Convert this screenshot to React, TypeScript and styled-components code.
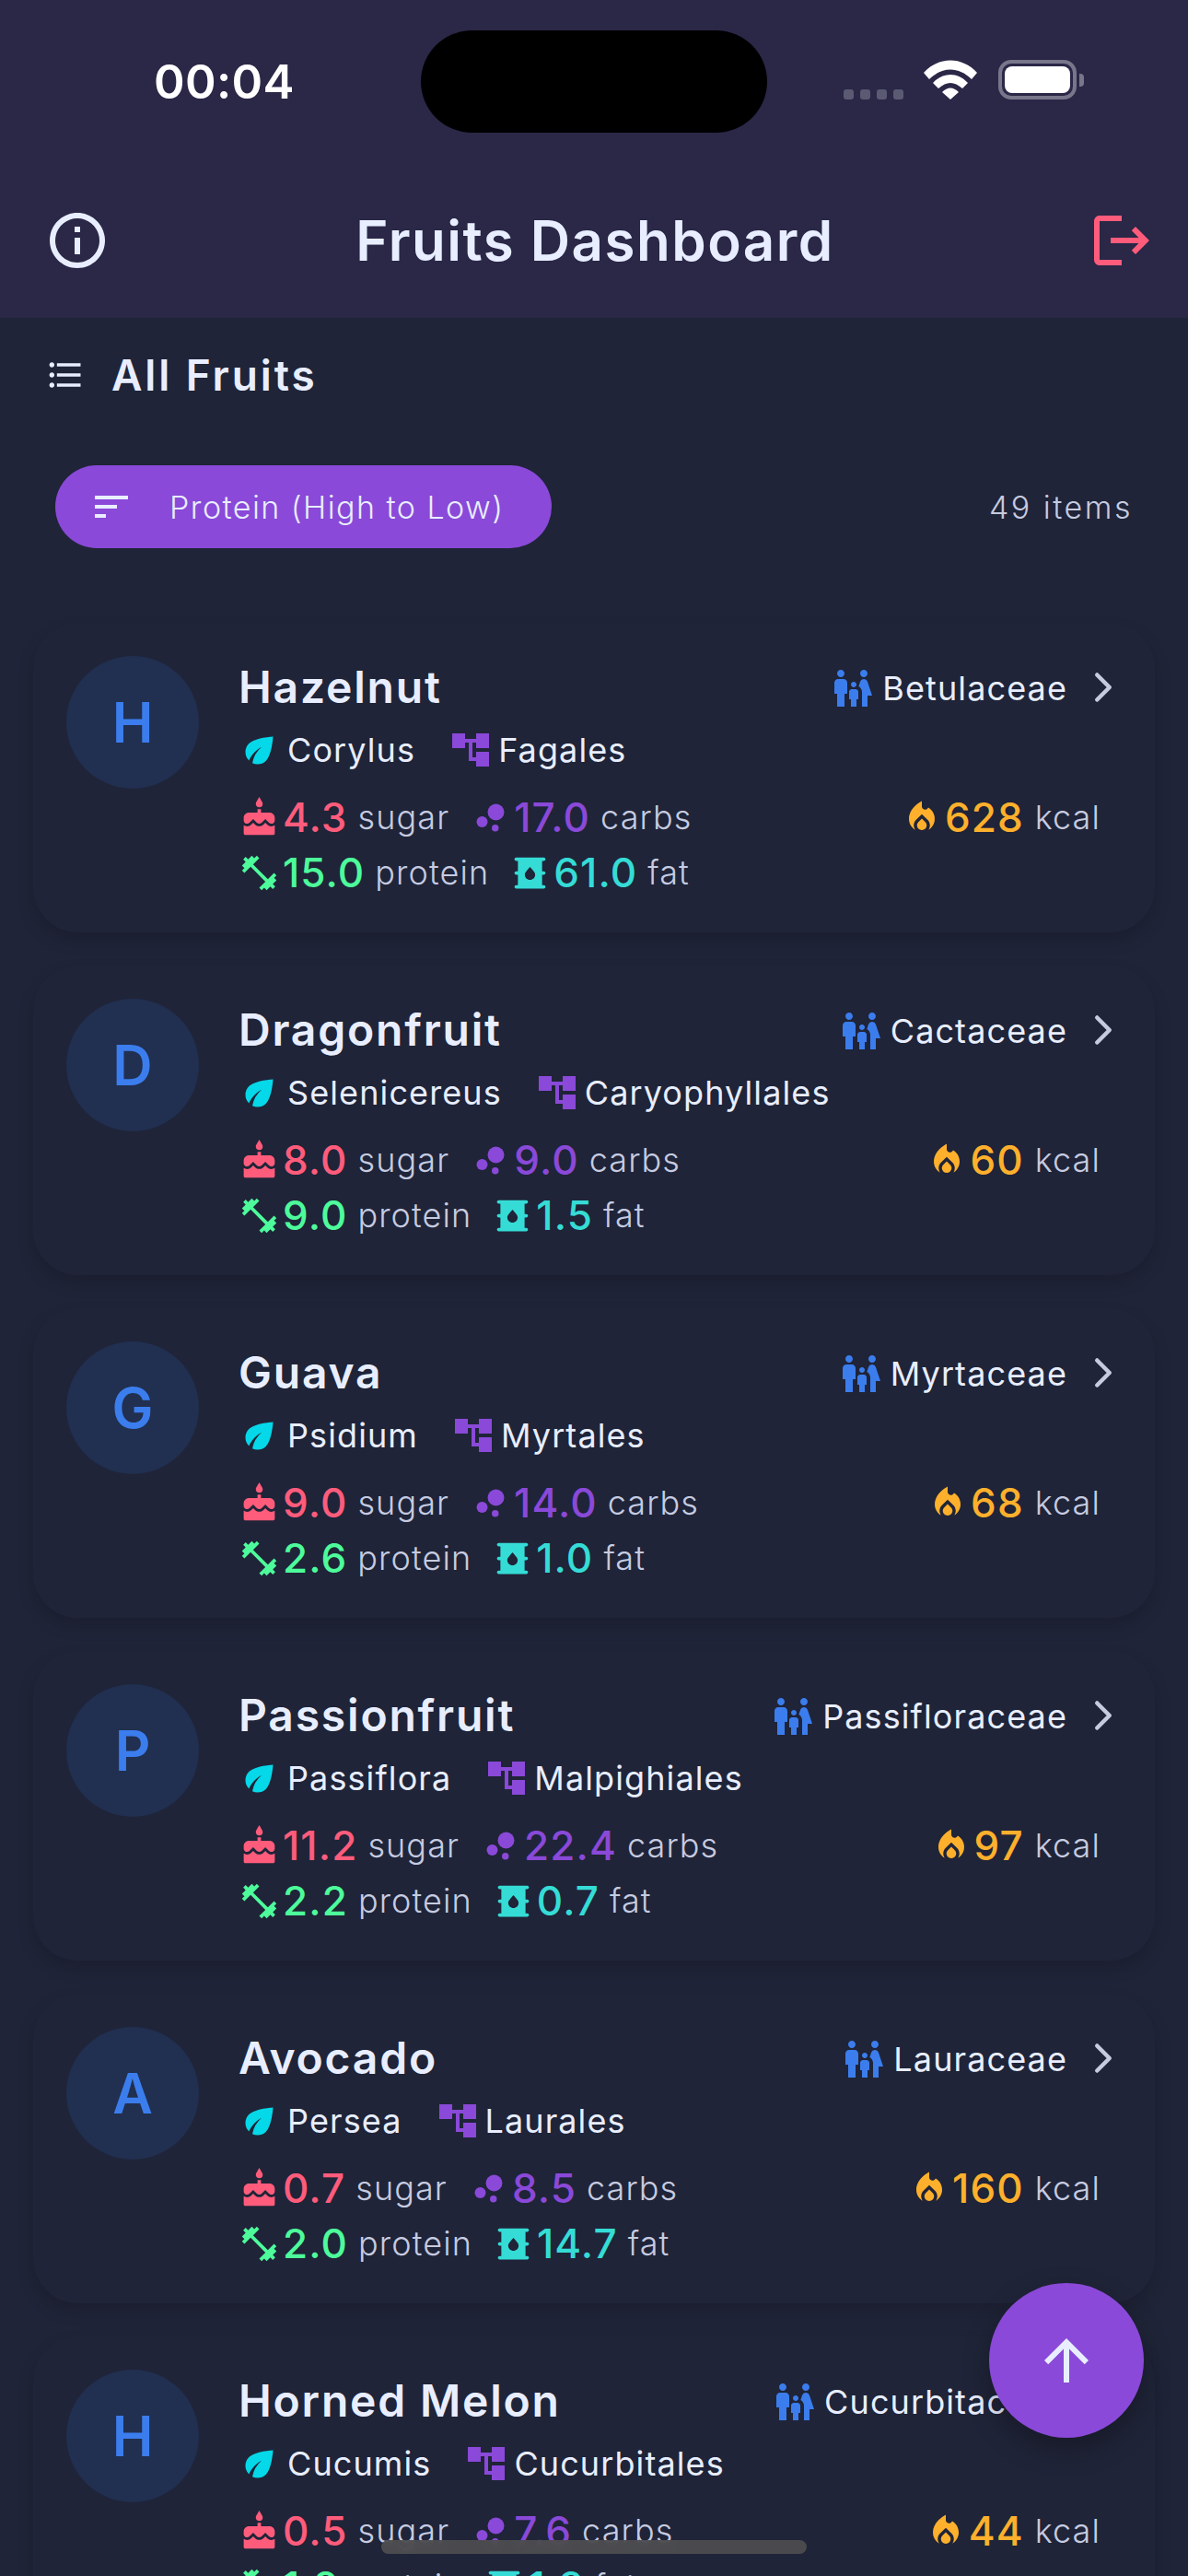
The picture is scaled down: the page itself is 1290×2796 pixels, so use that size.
import React from 'react';
import styled, { createGlobalStyle } from 'styled-components';
import {
  MdArrowUpward,
  MdBubbleChart,
  MdCake,
  MdEco,
  MdFamilyRestroom,
  MdFitnessCenter,
  MdFormatListBulleted,
  MdInfoOutline,
  MdLocalFireDepartment,
  MdLogout,
  MdOilBarrel,
  MdSort,
} from 'react-icons/md';
import { IoChevronForward } from 'react-icons/io5';

const Global = createGlobalStyle`
  html, body {
    margin: 0;
    padding: 0;
    background: #1f2438;
  }
  * {
    box-sizing: border-box;
  }
`;

const Screen = styled.div`
  position: relative;
  width: 1290px;
  height: 2796px;
  overflow: hidden;
  background: #1f2438;
  font-family: Inter, "Liberation Sans", sans-serif;
  color: #e8eeff;
`;

const Header = styled.header`
  height: 345px;
  background: #2a2747;
  padding-top: 33px;
`;

const StatusBar = styled.div`
  display: flex;
  align-items: flex-start;
  height: 111px;
`;

const Clock = styled.div`
  width: 457px;
  padding: 28px 0 0 167px;
  font-size: 51px;
  line-height: 56px;
  font-weight: 600;
  color: #ffffff;
  letter-spacing: 0.3px;
`;

const Island = styled.div`
  width: 376px;
  height: 111px;
  border-radius: 56px;
  background: #000000;
`;

const StatusIcons = styled.div`
  display: flex;
  align-items: flex-end;
  height: 75px;
  margin-left: 83px;
`;

const Dots = styled.div`
  display: flex;
  gap: 7px;
  margin-right: 22px;
`;

const Dot = styled.span`
  width: 11px;
  height: 11px;
  border-radius: 3px;
  background: #5b5a73;
`;

const BatteryShell = styled.div`
  display: flex;
  align-items: center;
  margin-left: 23px;
`;

const BatteryBody = styled.div`
  width: 85px;
  height: 43px;
  border: 4px solid #77768a;
  border-radius: 14px;
  padding: 3px;
`;

const BatteryFill = styled.div`
  height: 100%;
  border-radius: 8px;
  background: #ffffff;
`;

const BatteryCap = styled.div`
  width: 5px;
  height: 14px;
  margin-left: 3px;
  border-radius: 0 4px 4px 0;
  background: #77768a;
`;

const TitleBar = styled.div`
  display: flex;
  align-items: center;
  justify-content: space-between;
  height: 60px;
  margin-top: 87px;
  padding: 0 36px 0 48px;
`;

const Title = styled.h1`
  margin: 0 10px 0 0;
  font-size: 60px;
  line-height: 60px;
  font-weight: 600;
  letter-spacing: 1.5px;
  color: #e8eeff;
`;

const SectionRow = styled.div`
  display: flex;
  align-items: center;
  gap: 28px;
  height: 60px;
  margin-top: 32px;
  padding-left: 49px;
`;

const SectionTitle = styled.h2`
  margin: 0;
  font-size: 46px;
  line-height: 60px;
  font-weight: 600;
  letter-spacing: 2.9px;
`;

const SortRow = styled.div`
  display: flex;
  align-items: center;
  justify-content: space-between;
  margin-top: 68px;
  padding: 0 60px;
`;

const SortPill = styled.div`
  display: flex;
  align-items: center;
  width: 539px;
  height: 90px;
  padding-left: 37px;
  gap: 39px;
  border-radius: 45px;
  background: #8a49d8;
  font-size: 34px;
  font-weight: 300;
  letter-spacing: 1.45px;
`;

const Count = styled.div`
  font-size: 34px;
  font-weight: 300;
  letter-spacing: 2.5px;
  color: #c6cbe0;
`;

const List = styled.div`
  display: flex;
  flex-direction: column;
  gap: 36px;
  margin-top: 81px;
  padding: 0 36px;
`;

const Card = styled.article`
  display: flex;
  flex-shrink: 0;
  gap: 43px;
  height: 336px;
  padding: 36px 32px 36px 36px;
  border-radius: 48px;
  background: #1f2438;
  box-shadow: 0 9px 18px rgba(0, 0, 0, 0.16);
`;

const Avatar = styled.div`
  display: flex;
  align-items: center;
  justify-content: center;
  flex-shrink: 0;
  width: 144px;
  height: 144px;
  border-radius: 50%;
  background: #212f50;
  color: #3b7ded;
  font-size: 60px;
  font-weight: 600;
`;

const Body = styled.div`
  flex: 1;
  min-width: 0;
  padding-top: 4px;
`;

const TopRow = styled.div`
  display: flex;
  align-items: center;
  justify-content: space-between;
  height: 60px;
`;

const Name = styled.div`
  font-size: 48px;
  line-height: 60px;
  font-weight: 600;
  letter-spacing: 1.8px;
`;

const Family = styled.div`
  display: flex;
  align-items: center;
  padding-top: 2px;
  font-size: 36px;
  letter-spacing: 1.1px;
  color: #e8eeff;
`;

const FamilyIcon = styled(MdFamilyRestroom)`
  margin-right: 8px;
  color: #3b7ded;
`;

const Chevron = styled(IoChevronForward)`
  margin-left: 15px;
  margin-top: -2px;
  color: #c6cbe0;
`;

const TaxonomyRow = styled.div`
  display: flex;
  align-items: center;
  gap: 36px;
  height: 48px;
  margin-top: 14px;
`;

const Taxon = styled.div<{ $gap: number }>`
  display: flex;
  align-items: center;
  gap: ${(p) => p.$gap}px;
  font-size: 36px;
  letter-spacing: 1.1px;
`;

const StatsBlock = styled.div`
  position: relative;
  margin-top: 25px;
`;

const StatsRow = styled.div`
  display: flex;
  align-items: center;
  gap: 22px;
  height: 48px;
  margin-bottom: 12px;
`;

const Stat = styled.div`
  display: flex;
  align-items: center;
  gap: 3px;
`;

const Value = styled.span<{ $color: string }>`
  font-size: 44px;
  font-weight: 500;
  letter-spacing: 1.1px;
  color: ${(p) => p.$color};
`;

const Unit = styled.span`
  margin-left: 8px;
  font-size: 36px;
  font-weight: 300;
  letter-spacing: 1.1px;
  color: #c6cbe0;
`;

const Kcal = styled.div`
  display: flex;
  align-items: center;
  gap: 4px;
  position: absolute;
  top: 0;
  right: 27px;
  height: 48px;
`;

const TreeIcon = styled.svg`
  flex-shrink: 0;
  width: 48px;
  height: 48px;
  fill: #8a49d8;
`;

const Fab = styled.button`
  position: absolute;
  left: 1074px;
  top: 2478px;
  display: flex;
  align-items: center;
  justify-content: center;
  width: 168px;
  height: 168px;
  padding: 0;
  border: 0;
  border-radius: 50%;
  background: #8a49d8;
  color: #e8eeff;
  box-shadow: 0 12px 30px rgba(0, 0, 0, 0.3);
`;

const HomeBar = styled.div`
  position: absolute;
  left: 414px;
  top: 2757px;
  width: 462px;
  height: 15px;
  border-radius: 8px;
  background: rgba(78, 78, 80, 0.92);
  backdrop-filter: blur(6px);
`;

type Fruit = {
  name: string;
  family: string;
  genus: string;
  order: string;
  sugar: string;
  carbs: string;
  protein: string;
  fat: string;
  kcal: number;
};

const fruits: Fruit[] = [
  { name: 'Hazelnut', family: 'Betulaceae', genus: 'Corylus', order: 'Fagales', sugar: '4.3', carbs: '17.0', protein: '15.0', fat: '61.0', kcal: 628 },
  { name: 'Dragonfruit', family: 'Cactaceae', genus: 'Selenicereus', order: 'Caryophyllales', sugar: '8.0', carbs: '9.0', protein: '9.0', fat: '1.5', kcal: 60 },
  { name: 'Guava', family: 'Myrtaceae', genus: 'Psidium', order: 'Myrtales', sugar: '9.0', carbs: '14.0', protein: '2.6', fat: '1.0', kcal: 68 },
  { name: 'Passionfruit', family: 'Passifloraceae', genus: 'Passiflora', order: 'Malpighiales', sugar: '11.2', carbs: '22.4', protein: '2.2', fat: '0.7', kcal: 97 },
  { name: 'Avocado', family: 'Lauraceae', genus: 'Persea', order: 'Laurales', sugar: '0.7', carbs: '8.5', protein: '2.0', fat: '14.7', kcal: 160 },
  { name: 'Horned Melon', family: 'Cucurbitaceae', genus: 'Cucumis', order: 'Cucurbitales', sugar: '0.5', carbs: '7.6', protein: '1.8', fat: '1.3', kcal: 44 },
];

const FruitCard: React.FC<{ fruit: Fruit }> = ({ fruit }) => (
  <Card>
    <Avatar>{fruit.name[0]}</Avatar>
    <Body>
      <TopRow>
        <Name>{fruit.name}</Name>
        <Family>
          <FamilyIcon size={48} />
          {fruit.family}
          <Chevron size={48} />
        </Family>
      </TopRow>
      <TaxonomyRow>
        <Taxon $gap={8}>
          <MdEco size={45} color="#05d8e8" />
          {fruit.genus}
        </Taxon>
        <Taxon $gap={6}>
          <TreeIcon viewBox="0 0 24 24">
            <path d="M22 11V3h-7v3H9V3H2v8h7V8h2v10h4v3h7v-8h-7v3h-2V8h2v3z" />
          </TreeIcon>
          {fruit.order}
        </Taxon>
      </TaxonomyRow>
      <StatsBlock>
        <StatsRow>
          <Stat>
            <MdCake size={45} color="#ff5c7c" />
            <Value $color="#ff5c7c">{fruit.sugar}</Value>
            <Unit>sugar</Unit>
          </Stat>
          <Stat>
            <MdBubbleChart size={45} color="#8a49d8" />
            <Value $color="#8a49d8">{fruit.carbs}</Value>
            <Unit>carbs</Unit>
          </Stat>
        </StatsRow>
        <StatsRow>
          <Stat>
            <MdFitnessCenter size={45} color="#4dfb9b" />
            <Value $color="#4dfb9b">{fruit.protein}</Value>
            <Unit>protein</Unit>
          </Stat>
          <Stat>
            <MdOilBarrel size={45} color="#35dcd6" />
            <Value $color="#35dcd6">{fruit.fat}</Value>
            <Unit>fat</Unit>
          </Stat>
        </StatsRow>
        <Kcal>
          <MdLocalFireDepartment size={42} color="#feb02c" />
          <Value $color="#feb02c">{fruit.kcal}</Value>
          <Unit>kcal</Unit>
        </Kcal>
      </StatsBlock>
    </Body>
  </Card>
);

export default function App() {
  return (
    <Screen>
      <Global />
      <Header>
        <StatusBar>
          <Clock>00:04</Clock>
          <Island />
          <StatusIcons>
            <Dots>
              <Dot />
              <Dot />
              <Dot />
              <Dot />
            </Dots>
            <svg width="58" height="43" viewBox="0 0 58 43">
              <path d="M0 14 C16 -4 42 -4 58 14 L52 21 C38 7 20 7 6 21 Z" fill="#fff" />
              <path d="M10 25 C21 13 37 13 48 25 L42 31 C33 23 25 23 16 31 Z" fill="#fff" />
              <path d="M20 35 C26 29 32 29 38 35 L29 43 Z" fill="#fff" />
            </svg>
            <BatteryShell>
              <BatteryBody>
                <BatteryFill />
              </BatteryBody>
              <BatteryCap />
            </BatteryShell>
          </StatusIcons>
        </StatusBar>
        <TitleBar>
          <MdInfoOutline size={72} color="#e8eeff" />
          <Title>Fruits Dashboard</Title>
          <MdLogout size={72} color="#ff5c7c" />
        </TitleBar>
      </Header>
      <SectionRow>
        <MdFormatListBulleted size={44} color="#e8eeff" />
        <SectionTitle>All Fruits</SectionTitle>
      </SectionRow>
      <SortRow>
        <SortPill>
          <MdSort size={48} color="#e8eeff" />
          Protein (High to Low)
        </SortPill>
        <Count>49 items</Count>
      </SortRow>
      <List>
        {fruits.map((fruit) => (
          <FruitCard key={fruit.name} fruit={fruit} />
        ))}
      </List>
      <Fab>
        <MdArrowUpward size={72} />
      </Fab>
      <HomeBar />
    </Screen>
  );
}
